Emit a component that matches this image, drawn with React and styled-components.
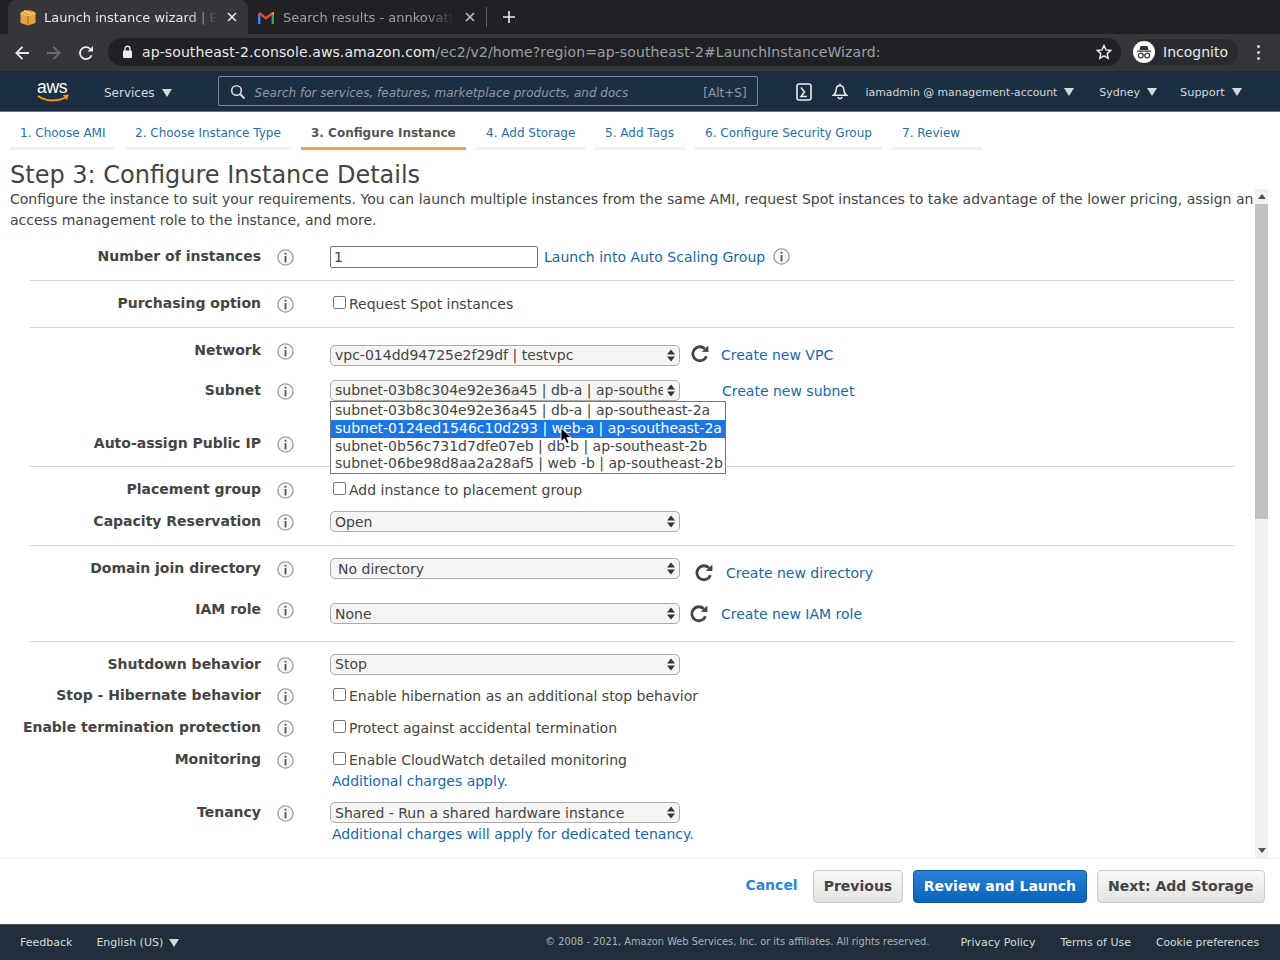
import React from "react";
import styled, { createGlobalStyle } from "styled-components";

const Global = createGlobalStyle`
  html, body { margin: 0; padding: 0; background: #fff; height: 960px; overflow: hidden; }
  body { font-family: "DejaVu Sans", sans-serif; color: #444; }
  * { box-sizing: border-box; }
`;

const Page = styled.div`
  width: 1280px; height: 960px; display: flex; flex-direction: column; overflow: hidden;
`;

/* ---------- browser chrome ---------- */
const TabStrip = styled.div`
  height: 34px; background: #202124; display: flex; padding: 0 0 0 8px; flex: none;
`;
const Tab = styled.div`
  width: ${p => p.$w}px; height: 34px; display: flex; align-items: center; padding: 0 0 0 ${p => (p.$active ? 12 : 10)}px; gap: ${p => (p.$active ? 8 : 9)}px;
  background: ${p => (p.$active ? "#35363a" : "transparent")};
  border-radius: 8px 8px 0 0; color: ${p => (p.$active ? "#e8eaed" : "#9aa0a6")};
`;
const TabTitle = styled.div`
  flex: 1; min-width: 0; font-size: 13px; white-space: nowrap; overflow: hidden;
  mask-image: linear-gradient(to right, #000 82%, transparent 100%);
`;
const TabClose = styled.div`
  width: 24px; height: 24px; flex: none; display: flex; align-items: center; justify-content: center; margin: 0 4px 0 -6px;
`;
const TabDivider = styled.div`
  width: 1px; height: 20px; background: #5f6368; margin: 7px 0 0 0;
`;
const NewTab = styled.div`
  width: 44px; height: 34px; display: flex; align-items: center; justify-content: center;
`;
const Toolbar = styled.div`
  height: 37px; background: #35363a; display: flex; align-items: center; flex: none; padding: 0 0 0 10px;
`;
const NavBtn = styled.div`
  width: 24px; height: 24px; margin-right: 8px; display: flex; align-items: center; justify-content: center;
`;
const Omnibox = styled.div`
  width: 1013px; height: 28px; margin: -1px 0 0 2px; background: #202124; border-radius: 14px; display: flex; align-items: center;
  padding: 0 9px 0 14px; font-size: 14px; letter-spacing: 0.1px; color: #9aa0a6; white-space: nowrap;
`;
const Host = styled.span`color: #e8eaed;`;
const UrlText = styled.div`flex: 1; margin-left: 9px;`;
const Profile = styled.div`
  width: 105px; height: 26px; margin: -1px 0 0 12px; background: #2a2b2e; border-radius: 13px; display: flex; align-items: center; gap: 8px;
  color: #e8eaed; font-size: 14px;
`;
const ProfileAvatar = styled.div`
  width: 22px; height: 22px; border-radius: 50%; background: #fff; flex: none; display: flex; align-items: center; justify-content: center;
`;
const Kebab = styled.div`
  margin: -1px 0 0 19px; width: 4px; display: flex; flex-direction: column; gap: 3px;
  & > i { display: block; width: 3px; height: 3px; border-radius: 50%; background: #dadce0; }
`;

/* ---------- AWS header ---------- */
const AwsBar = styled.div`
  height: 41px; flex: none; background: #1c2f42; border-bottom: 1px solid #6b7480; display: flex; align-items: center; padding-top: 4px; color: #d5dbdb; font-size: 11px; white-space: nowrap;
`;
const Logo = styled.div`
  width: 33px; margin: -2px 0 0 37px; height: 30px; position: relative; color: #fff; font-size: 17.5px; line-height: 20px; letter-spacing: -0.3px;
  font-family: "Liberation Sans", sans-serif;
`;
const Smile = styled.svg`position: absolute; left: 0; top: 17px;`;
const HeaderItem = styled.div`
  display: flex; align-items: center; gap: 7px; margin: ${p => (p.$fs === 12 ? 0 : -2)}px 0 0 ${p => p.$ml}px; font-size: ${p => p.$fs || 11}px;
`;
const Caret = styled.span`
  display: inline-block; width: 0; height: 0; border-left: 5px solid transparent; border-right: 5px solid transparent; border-top: 8px solid #d5dbdb;
`;
const Search = styled.div`
  width: 540px; height: 30px; margin: -4px 0 0 46px; border: 1px solid #7d8998; border-radius: 2px; display: flex; align-items: center; padding: 0 10px 0 11px; font-size: 12px; color: #8d99a5;
`;
const SearchIcon = styled.svg`flex: none; margin-top: 2px;`;
const SearchText = styled.div`flex: 1; margin: 4px 0 0 9px; font-style: italic;`;
const Shortcut = styled.div`margin-top: 4px;`;
const HeaderIcon = styled.div`margin: -2px 0 0 ${p => p.$ml}px; height: 20px; display: flex; align-items: center;`;

/* ---------- wizard steps ---------- */
const Steps = styled.div`
  height: 38px; flex: none; display: flex; gap: 10px; padding: 0 0 0 10px; background: #fff;
`;
const Step = styled.div`
  width: ${p => p.$w}px; height: 38px; padding: 7px 0 0 10px; display: flex; align-items: center; font-size: 12px; white-space: nowrap;
  border-bottom: 3px solid ${p => (p.$active ? "#e8a84c" : "#f2f2f2")};
  color: ${p => (p.$active ? "#555" : "#1f6fb0")};
  font-weight: ${p => (p.$active ? 700 : 400)};
`;

/* ---------- main ---------- */
const Main = styled.main`flex: 1; min-height: 0; display: flex; flex-direction: column;`;
const Title = styled.h1`
  margin: 0; height: 39px; padding: 11px 0 0 10px; font-size: 24px; line-height: 28px; font-weight: 400; color: #444; flex: none;
`;
const ScrollRegion = styled.div`
  height: 669px; flex: none; display: flex; overflow: hidden;
`;
const ScrollBody = styled.div`width: 1255px; flex: none;`;
const Intro = styled.p`
  margin: 0; height: 45px; padding: 0 0 0 10px; font-size: 14px; line-height: 21px; color: #444; white-space: nowrap;
`;
const Scrollbar = styled.div`
  width: 13px; height: 100%; background: #f1f1f1; display: flex; flex-direction: column; align-items: center;
`;
const ScrollArrow = styled.div`
  width: 13px; height: 15px; flex: none; display: flex; align-items: center; justify-content: center;
`;
const Thumb = styled.div`
  width: 13px; height: 315px; background: #c1c1c1; flex: none;
`;
const Spacer = styled.div`flex: 1;`;

const Group = styled.section`
  margin: 0 21px 0 30px; padding-top: 12px; border-bottom: 1px solid #d5d5d5;
`;
const Row = styled.div`
  height: ${p => p.$h}px; display: grid; grid-template-columns: 231px 69px 1fr;
`;
const Label = styled.div`
  display: flex; justify-content: flex-end; font-size: 14px; font-weight: 700; line-height: 20px; color: #444; white-space: nowrap;
`;
const InfoCell = styled.div`padding: 3px 0 0 16px; height: 20px;`;
const Control = styled.div`
  display: flex; flex-direction: ${p => (p.$col ? "column" : "row")}; align-items: ${p => (p.$col ? "flex-start" : "center")};
  align-self: start; margin-top: ${p => p.$mt || 0}px; height: ${p => (p.$col ? "auto" : "21px")}; position: relative; font-size: 14px; color: #444;
`;
const TextInput = styled.div`
  width: 208px; height: 22px; border: 1px solid #767676; border-radius: 2px; font-size: 14px; line-height: 20px; padding-left: 3px; background: #fff;
`;
const A = styled.span`
  color: #1369b1; font-size: 14px; white-space: nowrap; margin-left: ${p => p.$ml || 0}px; margin-top: ${p => p.$mt || 0}px;
`;
const SelectBox = styled.div`
  width: 350px; height: 21px; border: 1px solid #aaa; border-radius: 5px; background: #f5f5f5; font-size: 14px; line-height: ${p => p.$lh || 19}px; padding-left: ${p => p.$pl || 4}px; padding-right: 16px;
  color: #444; position: relative; flex: none;
`;
const SelectValue = styled.div`white-space: nowrap; overflow: hidden;`;
const SelectArrows = styled.svg`position: absolute; right: 3px; top: 2px;`;
const CheckLine = styled.label`display: flex; align-items: center; font-size: 14px; color: #444; height: 21px; white-space: nowrap;`;
const Check = styled.span`
  width: 13px; height: 13px; border: 1px solid #767676; border-radius: 2px; background: #fff; margin: -3px 3px 0 3px; flex: none;
`;
const Hint = styled.div`margin-left: 2px; margin-top: 2px; line-height: 19px;`;
const Refresh = styled.svg`margin-left: ${p => p.$ml}px; margin-top: ${p => p.$mt || 0}px; flex: none;`;
const InlineInfo = styled.span`margin-left: 8px; height: 17px;`;

const Menu = styled.ul`
  position: absolute; z-index: 5; left: 0; top: 21px; width: 396px; margin: 0; padding: 0; list-style: none; background: #fff; border: 1px solid #767676; font-size: 14px;
`;
const Option = styled.li`
  height: ${p => p.$h || 18}px; line-height: ${p => (p.$h || 18) - 2}px; padding-left: 4px; white-space: nowrap; color: ${p => (p.$sel ? "#fff" : "#444")}; background: ${p => (p.$sel ? "#1a76e6" : "transparent")};
`;
const Cursor = styled.svg`position: absolute; z-index: 6; left: 230px; top: 47px;`;

/* ---------- action bar + footer ---------- */
const Actions = styled.div`
  height: 66px; flex: none; display: flex; align-items: flex-start; justify-content: flex-end; padding: 11px 15px 0 0; border-top: 1px solid #f2f2f2;
`;
const Cancel = styled.div`
  font-size: 14px; font-weight: 700; color: #2e84d6; line-height: 31px; margin-right: 5px;
`;
const Btn = styled.div`
  height: 33px; padding: 0 ${p => p.$px || 10}px; margin-left: 10px; border-radius: 4px; font-size: 14px; font-weight: 700; line-height: 30px; white-space: nowrap;
  border: 1px solid ${p => (p.$primary ? "#0e5ca8" : "#ccc")};
  color: ${p => (p.$primary ? "#fff" : "#444")};
  background: ${p => (p.$primary ? "linear-gradient(#2a80d8, #0a62b8)" : "linear-gradient(#f8f8f8, #e4e4e4)")};
`;
const Footer = styled.footer`
  height: 36px; flex: none; background: #212e3b; border-top: 1px solid #4a4a4a; display: flex; align-items: center; color: #d5dbdb; font-size: 11px; white-space: nowrap; padding-right: 21px;
`;
const FootItem = styled.div`margin-left: ${p => p.$ml}px; display: flex; align-items: center; gap: 6px; font-size: ${p => p.$fs || 11}px;`;
const Copyright = styled.div`margin-left: auto; font-size: 9.83px; color: #aab3bb; transform: translateY(-1px);`;

const Info = () => (
  <svg width="17" height="17" viewBox="0 0 17 17">
    <circle cx="8.5" cy="8.5" r="7.6" fill="#f6f6f6" stroke="#a0a0a0" strokeWidth="1.4" />
    <rect x="7.6" y="3.8" width="1.8" height="1.9" fill="#555" />
    <rect x="7.6" y="7" width="1.8" height="6.4" fill="#555" />
  </svg>
);
const RefreshIcon = ({ ml, mt }) => (
  <Refresh $ml={ml} $mt={mt} width="20" height="20" viewBox="0 0 20 20">
    <path d="M16.4 12.2A7 7 0 1 1 14.8 4.8" fill="none" stroke="#444" strokeWidth="2.8" />
    <path d="M11.8 7.8L18.4 8V1.4z" fill="#444" />
  </Refresh>
);
const Select = ({ children, pl, lh }) => (
  <SelectBox $pl={pl} $lh={lh}>
    <SelectValue>{children}</SelectValue>
    <SelectArrows width="10" height="15" viewBox="0 0 10 15">
      <path d="M5 1.5L9 6.5H1zM5 13.5L1 8.5H9z" fill="#333" />
    </SelectArrows>
  </SelectBox>
);
const FieldRow = ({ label, h, children, mt, col }) => (
  <Row $h={h}>
    <Label>{label}</Label>
    <InfoCell><Info /></InfoCell>
    <Control $mt={mt} $col={col}>{children}</Control>
  </Row>
);
const Checkbox = ({ children }) => (
  <CheckLine><Check />{children}</CheckLine>
);

export default function App() {
  return (
    <Page>
      <Global />
      <TabStrip>
        <Tab $active $w={240}>
          <svg width="16" height="17" viewBox="0 0 16 17" style={{ flex: "none" }}>
            <path d="M2 2.5Q8 .2 14 2.5L15.5 4v10L8 16.500.5 14V4z" fill="#e8a33d" />
            <path d="M.5 4.3L8 6.8l7.500-2.500" stroke="#f6c97a" strokeWidth="1" fill="none" />
            <path d="M8 6.8v9.7" stroke="#a8701c" strokeWidth="1.1" />
            <path d="M4 1.8l7 3" stroke="#f8d48a" strokeWidth="1.5" fill="none" />
          </svg>
          <TabTitle>Launch instance wizard | EC2 Management</TabTitle>
          <TabClose>
            <svg width="10" height="10" viewBox="0 0 10 10"><path d="M1 1l8 8M9 1l-8 8" stroke="#e8eaed" strokeWidth="1.6" /></svg>
          </TabClose>
        </Tab>
        <Tab $w={238}>
          <svg width="16" height="13" viewBox="0 0 16 13" style={{ flex: "none" }}>
            <path d="M1.2 13V2.5" stroke="#4285f4" strokeWidth="2.4" />
            <path d="M14.8 13V2.5" stroke="#34a853" strokeWidth="2.4" />
            <path d="M1.2 2L8 7.2 14.8 2" stroke="#ea4335" strokeWidth="2.4" fill="none" />
            <path d="M13.6 2.4L16 .6V4z" fill="#fbbc04" />
          </svg>
          <TabTitle>Search results - annkovattil@gmail.com</TabTitle>
          <TabClose>
            <svg width="10" height="10" viewBox="0 0 10 10"><path d="M1 1l8 8M9 1l-8 8" stroke="#bdc1c6" strokeWidth="1.6" /></svg>
          </TabClose>
        </Tab>
        <TabDivider />
        <NewTab>
          <svg width="12" height="12" viewBox="0 0 12 12"><path d="M6 0v12M0 6h12" stroke="#e8eaed" strokeWidth="1.6" /></svg>
        </NewTab>
      </TabStrip>
      <Toolbar>
        <NavBtn>
          <svg width="16" height="16" viewBox="0 0 16 16"><path d="M15 8H2.5M8.5 1.8L2.3 8l6.2 6.2" stroke="#e8eaed" strokeWidth="1.8" fill="none" /></svg>
        </NavBtn>
        <NavBtn>
          <svg width="16" height="16" viewBox="0 0 16 16"><path d="M1 8h12.5M7.5 1.8L13.7 8l-6.2 6.2" stroke="#6b6e72" strokeWidth="1.8" fill="none" /></svg>
        </NavBtn>
        <NavBtn>
          <svg width="16" height="16" viewBox="0 0 16 16">
            <path d="M13.6 10.2A6 6 0 1 1 12.2 3.8" stroke="#e8eaed" strokeWidth="1.8" fill="none" />
            <path d="M9.5 6.6H15V1z" fill="#e8eaed" />
          </svg>
        </NavBtn>
        <Omnibox>
          <svg width="11" height="14" viewBox="0 0 11 14" style={{ flex: "none" }}>
            <rect x="1" y="5.5" width="9" height="7.5" rx="1" fill="#e8eaed" />
            <path d="M3 6V3.8a2.5 2.5 0 0 1 5 0V6" stroke="#e8eaed" strokeWidth="1.4" fill="none" />
          </svg>
          <UrlText><Host>ap-southeast-2.console.aws.amazon.com</Host>/ec2/v2/home?region=ap-southeast-2#LaunchInstanceWizard:</UrlText>
          <svg width="16" height="16" viewBox="0 0 16 16" style={{ flex: "none" }}>
            <path d="M8 1.5l2 4.4 4.8.5-3.6 3.2 1 4.7L8 11.9l-4.2 2.4 1-4.7L1.2 6.4 6 5.9z" fill="none" stroke="#e8eaed" strokeWidth="1.5" />
          </svg>
        </Omnibox>
        <Profile>
          <ProfileAvatar>
            <svg width="16" height="14" viewBox="0 0 16 14">
              <path d="M4.5 1h7l1 4h-9z M1 5.5h14v1.2H1z" fill="#35363a" />
              <circle cx="4.8" cy="10.5" r="2.4" fill="none" stroke="#35363a" strokeWidth="1.2" />
              <circle cx="11.2" cy="10.5" r="2.4" fill="none" stroke="#35363a" strokeWidth="1.2" />
              <path d="M7 10h2" stroke="#35363a" strokeWidth="1.1" />
            </svg>
          </ProfileAvatar>
          Incognito
        </Profile>
        <Kebab><i /><i /><i /></Kebab>
      </Toolbar>

      <AwsBar>
        <Logo>
          aws
          <Smile width="33" height="10" viewBox="0 0 33 10">
            <path d="M1 2c8 5.5 20 6 28 1" stroke="#ff9900" strokeWidth="1.8" fill="none" />
            <path d="M26 1.2l6-.6-2.4 5.4z" fill="#ff9900" />
          </Smile>
        </Logo>
        <HeaderItem $ml={34} $fs={12}>Services <Caret /></HeaderItem>
        <Search>
          <SearchIcon width="16" height="16" viewBox="0 0 16 16">
            <circle cx="6.5" cy="6.5" r="4.8" fill="none" stroke="#d5dbdb" strokeWidth="1.6" />
            <path d="M10 10l4.5 4.5" stroke="#d5dbdb" strokeWidth="1.8" />
          </SearchIcon>
          <SearchText>Search for services, features, marketplace products, and docs</SearchText>
          <Shortcut>[Alt+S]</Shortcut>
        </Search>
        <HeaderIcon $ml={38}>
          <svg width="16" height="18" viewBox="0 0 16 18">
            <rect x="1" y="1" width="14" height="16" rx="2" fill="none" stroke="#eaeded" strokeWidth="1.6" />
            <path d="M5 4.5L8.5 9 5 13.5h6" fill="none" stroke="#eaeded" strokeWidth="1.5" />
          </svg>
        </HeaderIcon>
        <HeaderIcon $ml={20}>
          <svg width="16" height="18" viewBox="0 0 16 18">
            <path d="M8 2.5c-2.6 0-3.800 2-3.800 4.600 0 2.400-1 3.800-2.700 5.200h13c-1.700-1.400-2.700-2.800-2.700-5.200 0-2.600-1.200-4.600-3.800-4.600z" fill="none" stroke="#eaeded" strokeWidth="1.5" />
            <path d="M8 .6v2M5.8 14a2.300 2.300 0 0 0 4.400 0" fill="none" stroke="#eaeded" strokeWidth="1.5" />
          </svg>
        </HeaderIcon>
        <HeaderItem $ml={18} $fs={10.85}>iamadmin @ management-account <Caret /></HeaderItem>
        <HeaderItem $ml={25}>Sydney <Caret /></HeaderItem>
        <HeaderItem $ml={23} $fs={11.3}>Support <Caret /></HeaderItem>
      </AwsBar>

      <Steps>
        <Step $w={105}>1. Choose AMI</Step>
        <Step $w={166}>2. Choose Instance Type</Step>
        <Step $w={165} $active>3. Configure Instance</Step>
        <Step $w={109}>4. Add Storage</Step>
        <Step $w={90}>5. Add Tags</Step>
        <Step $w={187}>6. Configure Security Group</Step>
        <Step $w={90}>7. Review</Step>
      </Steps>

      <Main>
        <Title>Step 3: Configure Instance Details</Title>
        <ScrollRegion>
          <ScrollBody>
            <Intro>
              Configure the instance to suit your requirements. You can launch multiple instances from the same AMI, request Spot instances to take advantage of the lower pricing, assign an<br />
              access management role to the instance, and more.
            </Intro>
            <Group>
              <FieldRow label="Number of instances" h={34}>
                <TextInput>1</TextInput>
                <A $ml={6}>Launch into Auto Scaling Group</A>
                <InlineInfo><Info /></InlineInfo>
              </FieldRow>
            </Group>
            <Group>
              <FieldRow label="Purchasing option" h={34}>
                <Checkbox>Request Spot instances</Checkbox>
              </FieldRow>
            </Group>
            <Group>
              <FieldRow label="Network" h={40} mt={5}>
                <Select>vpc-014dd94725e2f29df | testvpc</Select>
                <RefreshIcon ml={10} mt={-3} />
                <A $ml={11} $mt={-2}>Create new VPC</A>
              </FieldRow>
              <FieldRow label="Subnet" h={53}>
                <Select>subnet-03b8c304e92e36a45 | db-a | ap-southeast-2a</Select>
                <A $ml={42}>Create new subnet</A>
                <Menu>
                  <Option>subnet-03b8c304e92e36a45 | db-a | ap-southeast-2a</Option>
                  <Option $sel>subnet-0124ed1546c10d293 | web-a | ap-southeast-2a</Option>
                  <Option>subnet-0b56c731d7dfe07eb | db-b | ap-southeast-2b</Option>
                  <Option $h={17}>subnet-06be98d8aa2a28af5 | web -b | ap-southeast-2b</Option>
                </Menu>
                <Cursor width="12" height="18" viewBox="0 0 12 18">
                  <path d="M1 1v13.5l3.4-3 2.3 5 2.4-1-2.3-5h4.4z" fill="#000" stroke="#fff" strokeWidth="0.8" />
                </Cursor>
              </FieldRow>
              <FieldRow label="Auto-assign Public IP" h={33} />
            </Group>
            <Group>
              <FieldRow label="Placement group" h={32}>
                <Checkbox>Add instance to placement group</Checkbox>
              </FieldRow>
              <FieldRow label="Capacity Reservation" h={34}>
                <Select lh={21}>Open</Select>
              </FieldRow>
            </Group>
            <Group>
              <FieldRow label="Domain join directory" h={41}>
                <Select pl={7} lh={21}>No directory</Select>
                <RefreshIcon ml={14} mt={9} />
                <A $ml={12} $mt={9}>Create new directory</A>
              </FieldRow>
              <FieldRow label="IAM role" h={42} mt={4}>
                <Select lh={21}>None</Select>
                <RefreshIcon ml={9} />
                <A $ml={12}>Create new IAM role</A>
              </FieldRow>
            </Group>
            <Group>
              <FieldRow label="Shutdown behavior" h={31}>
                <Select>Stop</Select>
              </FieldRow>
              <FieldRow label="Stop - Hibernate behavior" h={32}>
                <Checkbox>Enable hibernation as an additional stop behavior</Checkbox>
              </FieldRow>
              <FieldRow label="Enable termination protection" h={32}>
                <Checkbox>Protect against accidental termination</Checkbox>
              </FieldRow>
              <FieldRow label="Monitoring" h={53} col>
                <Checkbox>Enable CloudWatch detailed monitoring</Checkbox>
                <Hint><A>Additional charges apply.</A></Hint>
              </FieldRow>
              <FieldRow label="Tenancy" h={56} col>
                <Select lh={21}>Shared - Run a shared hardware instance</Select>
                <Hint><A>Additional charges will apply for dedicated tenancy.</A></Hint>
              </FieldRow>
            </Group>
          </ScrollBody>
          <Scrollbar>
            <ScrollArrow><svg width="8" height="5" viewBox="0 0 8 5"><path d="M4 0l4 5H0z" fill="#505050" /></svg></ScrollArrow>
            <Thumb />
            <Spacer />
            <ScrollArrow><svg width="8" height="5" viewBox="0 0 8 5"><path d="M0 0h8L4 5z" fill="#505050" /></svg></ScrollArrow>
          </Scrollbar>
        </ScrollRegion>
        <Actions>
          <Cancel>Cancel</Cancel>
          <Btn>Previous</Btn>
          <Btn $primary $px={9.5}>Review and Launch</Btn>
          <Btn $px={10.5}>Next: Add Storage</Btn>
        </Actions>
      </Main>

      <Footer>
        <FootItem $ml={20}>Feedback</FootItem>
        <FootItem $ml={24}>English (US) <Caret /></FootItem>
        <Copyright>© 2008 - 2021, Amazon Web Services, Inc. or its affiliates. All rights reserved.</Copyright>
        <FootItem $ml={31}>Privacy Policy</FootItem>
        <FootItem $ml={25}>Terms of Use</FootItem>
        <FootItem $ml={25} $fs={10.7}>Cookie preferences</FootItem>
      </Footer>
    </Page>
  );
}
